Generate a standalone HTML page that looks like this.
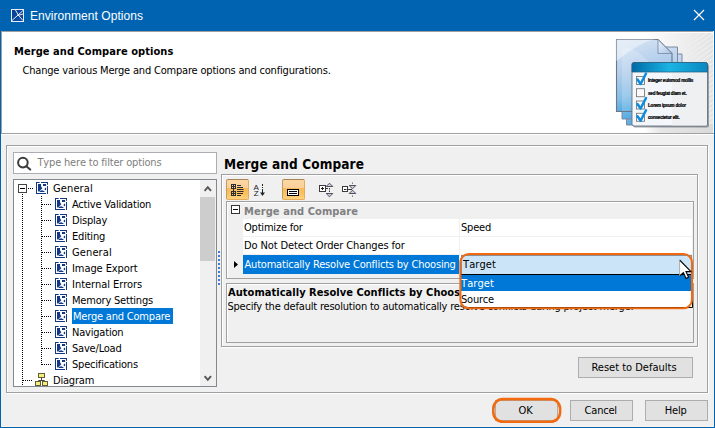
<!DOCTYPE html>
<html>
<head>
<meta charset="utf-8">
<title>Environment Options</title>
<style>
html,body{margin:0;padding:0;}
body{width:715px;height:428px;overflow:hidden;background:#f0f0f0;position:relative;
 font-family:"DejaVu Sans Condensed","Liberation Sans",sans-serif;font-size:11px;color:#000;}
*{box-sizing:border-box;}
.abs{position:absolute;}
.t{position:absolute;white-space:nowrap;line-height:14px;height:14px;letter-spacing:-0.2px;}
#win{position:absolute;left:0;top:0;width:715px;height:428px;background:#f0f0f0;}
#title{position:absolute;left:0;top:0;width:715px;height:31px;background:#0063b1;}
#title .cap{position:absolute;left:30px;top:8px;font-family:"Liberation Sans",sans-serif;font-size:12px;line-height:16px;color:#fff;white-space:nowrap;letter-spacing:0.05px;}
#bl,#br,#bb{position:absolute;background:#0063b1;}
#bl{left:0;top:31px;width:1px;height:397px;}
#br{left:714px;top:31px;width:1px;height:397px;}
#bb{left:0;top:427px;width:715px;height:1px;}
#hdr{position:absolute;left:1px;top:31px;width:713px;height:102px;background:#fff;}
#hdrline{position:absolute;left:1px;top:133px;width:713px;height:1px;background:#a0a0a0;}
#hdrline2{position:absolute;left:1px;top:134px;width:713px;height:1px;background:#fff;}
.etch{position:absolute;border:1px solid #a0a0a0;box-shadow:1px 1px 0 #fff, inset 1px 1px 0 #fff;}
.tb{position:absolute;width:23px;height:21px;border:1px solid #e8ab5c;border-radius:2.5px;background:linear-gradient(180deg,#fcd7a4 0,#fbd09a 40%,#f9bb58 44%,#fac061 70%,#fdd37c 100%);border-top-color:#a98555;border-left-color:#c39a62;border-radius:2px;}
.btn{position:absolute;background:#e1e1e1;border:1px solid #adadad;text-align:center;line-height:19px;height:21px;letter-spacing:-0.2px;}
.row{position:absolute;left:0;height:16px;white-space:nowrap;}
.lbl{position:absolute;margin-top:1px;line-height:14px;height:14px;letter-spacing:-0.2px;}
.hd{position:absolute;height:1px;background-image:repeating-linear-gradient(90deg,#000 0,#000 1px,transparent 1px,transparent 2px);}
.vd{position:absolute;width:1px;background-image:repeating-linear-gradient(180deg,#000 0,#000 1px,transparent 1px,transparent 2px);}
</style>
</head>
<body>
<svg width="0" height="0" style="position:absolute"><defs>
<g id="opt">
 <rect x="1" y="1" width="10" height="10" fill="#fff"/>
 <path d="M0 0.5 H3.7 M5 0.5 H12 M0.5 0 V12 M0 11.5 H10 M11.5 0 V2.8 M11.5 4 V12" stroke="#123a82" stroke-width="1" fill="none"/>
 <path d="M2 2 H5 V4.2 L6.3 6.3 L3.4 9.3 L2 9.6 Z" fill="#123a82"/>
 <rect x="7" y="2" width="3.1" height="2" fill="#123a82"/>
 <rect x="8.8" y="5.8" width="1.3" height="2.3" fill="#123a82"/>
 <path d="M3 10 Q6 6.6 9 10 Z" fill="#123a82"/>
</g>
<g id="dia">
 <path d="M6.5 4 V7.5 M3.5 9 V7.5 H9.5 V9" stroke="#4a4a38" stroke-width="1" fill="none"/>
 <rect x="3.5" y="0.5" width="6" height="4" fill="#f5ee7a" stroke="#625d38"/>
 <rect x="0.5" y="8.5" width="5" height="4" fill="#f5ee7a" stroke="#625d38"/>
 <rect x="7.5" y="8.5" width="5" height="4" fill="#f5ee7a" stroke="#625d38"/>
</g>
</defs></svg>
<div id="win">
 <div id="title">
  <svg class="abs" style="left:11px;top:9px" width="13" height="13" viewBox="0 0 13 13">
   <defs><linearGradient id="tig" x1="0" y1="0" x2="1" y2="1"><stop offset="0" stop-color="#0b3a94"/><stop offset="1" stop-color="#0a4fa8"/></linearGradient></defs>
   <rect x="0.5" y="0.5" width="12" height="12" fill="url(#tig)" stroke="#e8eef8" stroke-width="1"/>
   <path d="M4.5 1 Q6.5 6 12 11.5 M12 1.5 L1 11.5 M6.8 6.4 L12 5" stroke="#fff" stroke-width="0.9" fill="none"/>
  </svg>
  <div class="cap">Environment Options</div>
  <svg class="abs" style="left:693px;top:9px" width="12" height="12" viewBox="0 0 12 12"><path d="M1 1 L11 11 M11 1 L1 11" stroke="#fff" stroke-width="1.2" fill="none"/></svg>
 </div>
 <div id="hdr"></div>

 <!-- header image -->
 <svg class="abs" style="left:604px;top:31px" width="110" height="102" viewBox="0 0 110 102">
  <defs>
   <linearGradient id="bgf" x1="0" y1="0" x2="1" y2="0"><stop offset="0" stop-color="#fff"/><stop offset="0.3" stop-color="#f6f6f6"/><stop offset="0.7" stop-color="#ebebeb"/><stop offset="1" stop-color="#e2e2e2"/></linearGradient>
   <linearGradient id="pg" x1="0" y1="0" x2="0.25" y2="1"><stop offset="0" stop-color="#dbe6f4"/><stop offset="0.45" stop-color="#b4cfec"/><stop offset="0.78" stop-color="#86bfe8"/><stop offset="1" stop-color="#4aa6e0"/></linearGradient>
   <linearGradient id="tbar" x1="0" y1="0" x2="1" y2="0"><stop offset="0" stop-color="#006aa6"/><stop offset="0.5" stop-color="#19b4e4"/><stop offset="1" stop-color="#0b86c0"/></linearGradient>
   <linearGradient id="fold" x1="0" y1="0" x2="1" y2="1"><stop offset="0" stop-color="#eef4fb"/><stop offset="1" stop-color="#a9c4e6"/></linearGradient>
   <pattern id="hatch" width="4" height="4" patternUnits="userSpaceOnUse" patternTransform="rotate(-35)"><rect width="4" height="1.2" fill="#f8f8f8"/></pattern>
   <mask id="hmask"><rect x="40" y="2" width="69" height="100" fill="url(#hmg)"/></mask><linearGradient id="hmg" x1="0" y1="0" x2="1" y2="0"><stop offset="0.45" stop-color="#000"/><stop offset="1" stop-color="#bbb"/></linearGradient>
   <linearGradient id="bot" x1="0" y1="0" x2="1" y2="0"><stop offset="0" stop-color="#fff"/><stop offset="0.25" stop-color="#e6e6e6"/><stop offset="1" stop-color="#dadada"/></linearGradient>
   <linearGradient id="hm" x1="0" y1="0" x2="1" y2="0"><stop offset="0" stop-color="#fff" stop-opacity="1"/><stop offset="1" stop-color="#fff" stop-opacity="0"/></linearGradient>
  </defs>
  <rect x="40" y="2" width="69" height="100" fill="url(#bgf)"/>
  <rect x="40" y="2" width="69" height="100" fill="url(#hatch)" mask="url(#hmask)"/>
  <!-- pages -->
  <path d="M22.5 23 H78 V94 H22.5 Z" fill="url(#pg)" stroke="#7d8aa0" stroke-width="1"/>
  <path d="M18 16 H73.5 V88 H18 Z" fill="url(#pg)" stroke="#7d8aa0" stroke-width="1"/>
  <path d="M12.5 8.5 H54 L68 22.5 V80.5 H12.5 Z" fill="url(#pg)" stroke="#6c7686" stroke-width="1.1"/>
  <path d="M12.5 30 Q40 8 54 8.5 H12.5 Z" fill="#eaf1f9" opacity="0.7"/>
  <path d="M18 80 V18 Q30 14 44 30 L44 80 Z" fill="#fff" opacity="0.18"/>
  <path d="M54 8.5 V22.5 H68 Z" fill="url(#fold)" stroke="#7d8da6" stroke-width="0.9"/>
  <!-- checklist window -->
  <rect x="40" y="93" width="69" height="9" fill="url(#bot)"/>
  <rect x="29" y="33" width="76" height="63.6" rx="2" fill="#4a5560" opacity="0.5"/>
  <rect x="28" y="31.5" width="75.5" height="63.5" rx="2" fill="#f3f7fb" stroke="#66717e" stroke-width="0.9"/>
  <rect x="68" y="42" width="35" height="52.5" fill="#ececec" opacity="0.7"/>
  <path d="M28 41 V33.5 Q28 31.5 30 31.5 H101.5 Q103.5 31.5 103.5 33.5 V41 Z" fill="url(#tbar)" stroke="#2c5f80" stroke-width="0.8"/>
  <g fill="#fafafa" stroke="#7a7a7a" stroke-width="0.9">
   <rect x="32.5" y="45.5" width="8" height="8"/>
   <rect x="32.5" y="57.7" width="8" height="8"/>
   <rect x="32.5" y="70" width="8" height="8"/>
   <rect x="32.5" y="82.3" width="8" height="8"/>
  </g>
  <g fill="none" stroke="#0a8ce0" stroke-width="2.5" stroke-linejoin="round" stroke-linecap="round">
   <path d="M33.5 48.5 L36.6 53 L42 42.5"/>
   <path d="M33.5 73 L36.6 77.5 L42 67"/>
   <path d="M33.5 85.3 L36.6 89.8 L42 79.3"/>
  </g>
  <g font-family="Liberation Sans, sans-serif" font-size="4.55" font-weight="bold" fill="#000" stroke="#000" stroke-width="0.22" letter-spacing="-0.2">
   <text x="44" y="51.2">Integer euismod mollis</text>
   <text x="44" y="63.5">sed feugiat diam et.</text>
   <text x="44" y="75.8">Lorem ipsum dolor</text>
   <text x="44" y="88.1">consectetur elit.</text>
  </g>
 </svg>
 <div id="hdrline"></div><div id="hdrline2"></div>
 <div class="abs" style="left:1px;top:31px;width:1px;height:103px;background:#a0a0a0"></div>
 <div class="abs" style="left:1px;top:31px;width:712px;height:1px;background:#a0a0a0"></div>
 <div class="abs" style="left:1px;top:426px;width:713px;height:1px;background:#f8f6ee"></div>
 <div id="bl"></div><div id="br"></div><div id="bb"></div>

 <div class="t" style="left:14px;top:45px;font-weight:bold;letter-spacing:0.06px">Merge and Compare options</div>
 <div class="t" style="left:22.5px;top:64px;letter-spacing:-0.19px">Change various Merge and Compare options and configurations.</div>

 <!-- outer etched panel -->
 <div class="etch" style="left:6px;top:145px;width:702px;height:248px;"></div>

 <!-- search -->
 <div class="abs" style="left:13px;top:152px;width:204px;height:22px;background:#fff;border:1px solid #abadb3;"></div>
 <svg class="abs" style="left:17px;top:155px" width="15" height="16" viewBox="0 0 15 16"><circle cx="5.9" cy="7.6" r="4.8" fill="none" stroke="#3c3c3c" stroke-width="2"/><path d="M9.6 11.4 L13.2 14.6" stroke="#3c3c3c" stroke-width="2" stroke-linecap="round"/></svg>
 <div class="t" style="left:37.5px;top:156px;color:#808080;font-kerning:none;letter-spacing:-0.18px">Type here to filter options</div>

 <!-- tree -->
 <div id="tree" class="abs" style="left:13px;top:179px;width:204px;height:208px;background:#fff;border:1px solid #828790;overflow:hidden;">
<div class="vd" style="left:8px;top:14px;height:194px"></div>
<div class="vd" style="left:27px;top:16px;height:169px"></div>
<div class="abs" style="left:4px;top:4px;width:9px;height:9px;border:1px solid #444;background:#fff"><div class="abs" style="left:1px;top:3px;width:5px;height:1px;background:#000"></div></div>
<div class="hd" style="left:14px;top:8px;width:6px"></div>
<svg class="abs" style="left:22px;top:2px" width="12" height="12" viewBox="0 0 12 12"><use href="#opt"/></svg>
<div class="lbl" style="left:39px;top:1px;letter-spacing:0.12px">General</div>
<div class="hd" style="left:28px;top:24px;width:10px"></div>
<svg class="abs" style="left:41px;top:18px" width="12" height="12" viewBox="0 0 12 12"><use href="#opt"/></svg>
<div class="lbl" style="left:58px;top:17px">Active Validation</div>
<div class="hd" style="left:28px;top:40px;width:10px"></div>
<svg class="abs" style="left:41px;top:34px" width="12" height="12" viewBox="0 0 12 12"><use href="#opt"/></svg>
<div class="lbl" style="left:58px;top:33px">Display</div>
<div class="hd" style="left:28px;top:56px;width:10px"></div>
<svg class="abs" style="left:41px;top:50px" width="12" height="12" viewBox="0 0 12 12"><use href="#opt"/></svg>
<div class="lbl" style="left:58px;top:49px">Editing</div>
<div class="hd" style="left:28px;top:72px;width:10px"></div>
<svg class="abs" style="left:41px;top:66px" width="12" height="12" viewBox="0 0 12 12"><use href="#opt"/></svg>
<div class="lbl" style="left:58px;top:65px;letter-spacing:0.12px">General</div>
<div class="hd" style="left:28px;top:88px;width:10px"></div>
<svg class="abs" style="left:41px;top:82px" width="12" height="12" viewBox="0 0 12 12"><use href="#opt"/></svg>
<div class="lbl" style="left:58px;top:81px;letter-spacing:-0.08px">Image Export</div>
<div class="hd" style="left:28px;top:104px;width:10px"></div>
<svg class="abs" style="left:41px;top:98px" width="12" height="12" viewBox="0 0 12 12"><use href="#opt"/></svg>
<div class="lbl" style="left:58px;top:97px;letter-spacing:-0.02px">Internal Errors</div>
<div class="hd" style="left:28px;top:120px;width:10px"></div>
<svg class="abs" style="left:41px;top:114px" width="12" height="12" viewBox="0 0 12 12"><use href="#opt"/></svg>
<div class="lbl" style="left:58px;top:113px">Memory Settings</div>
<div class="hd" style="left:28px;top:136px;width:10px"></div>
<svg class="abs" style="left:41px;top:130px" width="12" height="12" viewBox="0 0 12 12"><use href="#opt"/></svg>
<div class="lbl" style="left:58px;top:128px;margin-top:0;height:16px;width:101px;line-height:18px;overflow:hidden;padding:0 0 0 1px;background:#0078d7;color:#fff">Merge and Compare</div>
<div class="hd" style="left:28px;top:152px;width:10px"></div>
<svg class="abs" style="left:41px;top:146px" width="12" height="12" viewBox="0 0 12 12"><use href="#opt"/></svg>
<div class="lbl" style="left:58px;top:145px">Navigation</div>
<div class="hd" style="left:28px;top:168px;width:10px"></div>
<svg class="abs" style="left:41px;top:162px" width="12" height="12" viewBox="0 0 12 12"><use href="#opt"/></svg>
<div class="lbl" style="left:58px;top:161px">Save/Load</div>
<div class="hd" style="left:28px;top:184px;width:10px"></div>
<svg class="abs" style="left:41px;top:178px" width="12" height="12" viewBox="0 0 12 12"><use href="#opt"/></svg>
<div class="lbl" style="left:58px;top:177px">Specifications</div>
<div class="hd" style="left:9px;top:200px;width:10px"></div>
<svg class="abs" style="left:21px;top:193px" width="14" height="14" viewBox="0 0 14 14"><use href="#dia"/></svg>
<div class="lbl" style="left:39px;top:193px">Diagram</div>
</div>


 <!-- scrollbar -->
 <div class="abs" style="left:200px;top:180px;width:16px;height:206px;background:#f0f0f0;"></div>
 <div class="abs" style="left:200px;top:197px;width:15px;height:64px;background:#cdcdcd;"></div>
 <svg class="abs" style="left:203px;top:185px" width="10" height="8" viewBox="0 0 10 8"><path d="M1.6 5.8 L4.8 2.2 L8 5.8" stroke="#585858" stroke-width="2" fill="none"/></svg>
 <svg class="abs" style="left:203px;top:373.5px" width="10" height="8" viewBox="0 0 10 8"><path d="M1.6 2.2 L4.8 5.8 L8 2.2" stroke="#585858" stroke-width="2" fill="none"/></svg>
 <!-- splitter dots -->
 <div class="abs" style="left:218px;top:251px;width:2px;height:34px;background-image:repeating-linear-gradient(180deg,#3f7cd9 0,#3f7cd9 2px,transparent 2px,transparent 4px);"></div>
 <!-- right panel -->
 <div class="t" style="left:224px;top:155px;font-weight:bold;font-size:13.5px;line-height:18px;height:18px;letter-spacing:0.1px;">Merge and Compare</div>
 <div class="etch" style="left:221px;top:174px;width:477px;height:173px;"></div>


 <!-- toolbar -->
 <div class="tb" style="left:226px;top:179px;"></div>
 <svg class="abs" style="left:231px;top:184px" width="13" height="12" viewBox="0 0 13 12">
  <path d="M2.5 5 V7" stroke="#2e2e2e" stroke-width="1"/>
  <rect x="0.5" y="0.5" width="4" height="4" fill="none" stroke="#2e2e2e"/><path d="M0 2.5 H5 M2.5 0 V5" stroke="#2e2e2e" stroke-width="1"/>
  <rect x="0.5" y="7.5" width="4" height="4" fill="none" stroke="#2e2e2e"/><path d="M0 9.5 H5 M2.5 7 V12" stroke="#2e2e2e" stroke-width="1"/>
  <path d="M6 1.5 H10 M6 3.5 H12 M6 5.5 H12.6 M6 7.5 H12.6 M6 9.5 H12 M6 11.5 H10" stroke="#2e2e2e" stroke-width="1"/>
 </svg>
 <svg class="abs" style="left:253px;top:182px" width="14" height="16" viewBox="0 0 14 16">
  <text x="0.6" y="7.6" font-family="Liberation Sans, sans-serif" font-size="8" fill="#222">A</text>
  <text x="0.8" y="14.4" font-family="Liberation Sans, sans-serif" font-size="8" fill="#222">Z</text>
  <path d="M9.5 2 V4 M9.5 5 V6 M9.5 7 V12" stroke="#222" stroke-width="1" fill="none"/>
  <path d="M7 10.5 H12 L9.5 14 Z" fill="#222"/>
 </svg>
 <div class="tb" style="left:282px;top:179px;"></div>
 <svg class="abs" style="left:287px;top:189px" width="12" height="7" viewBox="0 0 12 7">
  <rect x="0" y="0" width="12" height="7" fill="#000"/><rect x="1" y="1" width="10" height="5" fill="#fff"/><rect x="2" y="2" width="8" height="1" fill="#000"/><rect x="2" y="4" width="8" height="1" fill="#000"/>
 </svg>
 <svg class="abs" style="left:319px;top:182px" width="16" height="16" viewBox="0 0 16 16">
  <rect x="0.5" y="3.5" width="6" height="6" fill="#fff" stroke="#3c3c3c"/><path d="M2 6.5 H5 M3.5 5 V8" stroke="#222"/>
  <path d="M7 6.5 H9" stroke="#3c3c3c"/>
  <path d="M10.5 6 V10" stroke="#3c3c3c" stroke-dasharray="1.5 1"/>
  <path d="M10.5 1.2 L13.8 4.5 H7.2 Z" fill="#c8ccf0" stroke="#444" stroke-width="0.9"/>
  <path d="M10.5 14.8 L13.8 11.5 H7.2 Z" fill="#c8ccf0" stroke="#444" stroke-width="0.9"/>
 </svg>
 <svg class="abs" style="left:342px;top:182px" width="16" height="16" viewBox="0 0 16 16">
  <rect x="0.5" y="4.5" width="5" height="5" fill="#fff" stroke="#3c3c3c"/><path d="M2 7.5 H4.5" stroke="#222"/>
  <path d="M6 7.5 H10" stroke="#3c3c3c"/>
  <path d="M10.5 0.6 V1.6 M10.5 13.6 V14.6" stroke="#3c3c3c"/>
  <path d="M10.5 6.8 L13.8 3.5 H7.2 Z" fill="#c8ccf0" stroke="#444" stroke-width="0.9"/>
  <path d="M10.5 8.2 L13.8 11.5 H7.2 Z" fill="#c8ccf0" stroke="#444" stroke-width="0.9"/>
 </svg>

 <!-- property table -->
 <div class="abs" style="left:226px;top:201px;width:468px;height:78px;border:1px solid #a0a0a0;background:#f0f0f0;box-shadow:inset 1px 1px 0 #fff;"></div>
 <div class="abs" style="left:231px;top:205px;width:9px;height:9px;border:1px solid #333;background:#fff"><div class="abs" style="left:1px;top:3px;width:5px;height:1px;background:#000"></div></div>
 <div class="t" style="left:244px;top:205px;font-weight:bold;color:#808080;letter-spacing:0.08px">Merge and Compare</div>
 <div class="abs" style="left:243px;top:219px;width:216px;height:17px;background:#fff"></div>
 <div class="abs" style="left:460px;top:219px;width:232px;height:17px;background:#fff"></div>
 <div class="abs" style="left:243px;top:237px;width:216px;height:17px;background:#fff"></div>
 <div class="abs" style="left:460px;top:237px;width:232px;height:17px;background:#fff"></div>
 <div class="abs" style="left:243px;top:255px;width:216px;height:19px;background:#0078d7"></div>
 <div class="abs" style="left:460px;top:255px;width:232px;height:18px;background:#fff"></div>
 <div class="t" style="left:244px;top:221px;">Optimize for</div>
 <div class="t" style="left:461px;top:221px;">Speed</div>
 <div class="t" style="left:244px;top:239px;letter-spacing:-0.12px">Do Not Detect Order Changes for</div>
 <div class="t" style="left:244.5px;top:258px;color:#fff;letter-spacing:-0.2px">Automatically Resolve Conflicts by Choosing</div>
 <svg class="abs" style="left:234px;top:261px" width="4" height="7" viewBox="0 0 4 7"><path d="M0 0 L4 3.5 L0 7 Z" fill="#000"/></svg>

 <!-- description -->
 <div class="abs" style="left:226px;top:283px;width:468px;height:60px;border:1px solid #a0a0a0;box-shadow:inset 1px 1px 0 #fff;overflow:hidden"></div>
 <div class="abs" style="left:228px;top:284px;width:464px;height:40px;overflow:hidden">
  <div class="t" style="left:0;top:2px;font-weight:bold;letter-spacing:0.04px">Automatically Resolve Conflicts by Choosing</div>
  <div class="t" style="left:-0.6px;top:16px;letter-spacing:-0.2px">Specify the default resolution to automatically resolve conflicts during project merge.</div>
 </div>

 <!-- combo + dropdown -->
 <div class="abs" style="left:461px;top:255px;width:231px;height:19px;background:#cce4f7;border:1px solid #8a8f96;border-bottom:none"></div>
 <div class="t" style="left:463px;top:258px;font-kerning:none;letter-spacing:0.1px">Target</div>
 <div class="abs" style="left:460px;top:274px;width:233px;height:34px;background:#fff;border:1px solid #000;border-bottom-left-radius:8px;"></div>
 <div class="abs" style="left:461px;top:275px;width:231px;height:16px;background:#0078d7"></div>
 <div class="t" style="left:461px;top:276.5px;color:#fff;font-kerning:none;letter-spacing:0.1px">Target</div>
 <div class="t" style="left:461px;top:293px;">Source</div>
 <svg class="abs" style="left:457px;top:251px" width="240" height="62" viewBox="0 0 240 62"><rect x="3.4" y="3" width="231.6" height="54.3" rx="8.5" fill="none" stroke="#f26a10" stroke-width="2.1"/></svg>
 <!-- cursor -->
 <svg class="abs" style="left:678px;top:258px" width="15" height="22" viewBox="0 0 15 22"><path d="M1.6 2 V18 L5.4 14.6 L8 20.4 L10.6 19.2 L8 13.6 H13 Z" fill="#fff"/><path d="M1.6 2 L13 13.6 H8 L10.6 19.2 L8 20.4 L5.4 14.6 L1.6 18" fill="none" stroke="#000" stroke-width="1.1"/><path d="M1.6 2 V18" stroke="#9a9a9a" stroke-width="0.8"/></svg>

 <!-- buttons -->
 <div class="btn" style="left:578px;top:357px;width:115px;letter-spacing:0;padding-right:3px">Reset to Defaults</div>
 <div class="btn" style="left:495px;top:400px;width:63px;padding-right:2px">OK</div>
 <svg class="abs" style="left:490px;top:396px" width="74" height="30" viewBox="0 0 74 30"><rect x="3.3" y="3.1" width="66.8" height="22.7" rx="9.5" fill="none" stroke="#f26a10" stroke-width="2.6"/></svg>
 <div class="btn" style="left:570px;top:400px;width:63px;padding-right:1.5px">Cancel</div>
 <div class="btn" style="left:645px;top:400px;width:63px;padding-right:1.5px">Help</div>
</div>
</body>
</html>
